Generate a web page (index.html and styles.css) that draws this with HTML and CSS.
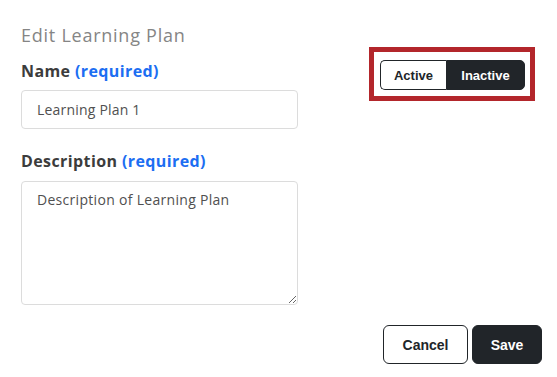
FILE: index.html
```html
<!DOCTYPE html>
<html lang="en">
<head>
<meta charset="utf-8">
<title>Edit Learning Plan</title>
<link rel="stylesheet" href="styles.css">
</head>
<body>
<div class="page">
  <div class="top">
    <form class="form">
      <h1 class="title">Edit Learning Plan</h1>
      <label class="label label-name" for="name">Name <span class="req">(required)</span></label>
      <input class="field" id="name" type="text" value="Learning Plan 1">
      <label class="label label-desc" for="desc">Description <span class="req">(required)</span></label>
      <textarea class="field area" id="desc">Description of Learning Plan</textarea>
    </form>
    <div class="highlight">
      <div class="toggle">
        <button class="tog tog-active" type="button">Active</button>
        <button class="tog tog-inactive" type="button">Inactive</button>
      </div>
    </div>
  </div>
  <div class="actions">
    <button class="btn btn-cancel" type="button">Cancel</button>
    <button class="btn btn-save" type="button">Save</button>
  </div>
</div>
</body>
</html>
```

FILE: styles.css
```css
* { box-sizing: border-box; }
html, body { margin: 0; padding: 0; background: #fff; }
body { font-family: "Open Sans", "Noto Sans", sans-serif; }

.page {
  padding: 23px 15px 0 21px;
}

.top {
  display: flex;
  gap: 71px;
  align-items: flex-start;
}

.form {
  width: 277px;
  display: flex;
  flex-direction: column;
  margin: 0;
}

.title {
  margin: 0;
  font-size: 18px;
  line-height: 24px;
  font-weight: 400;
  letter-spacing: 0.75px;
  color: #858585;
}

.label {
  font-size: 16px;
  line-height: 22px;
  font-weight: 700;
  letter-spacing: 0.4px;
  color: #3c3c3c;
}
.label-name { margin-top: 13px; }
.label-desc { margin-top: 21px; }
.req { color: #1c6ef2; }

.field {
  display: block;
  width: 277px;
  margin-top: 8px;
  border: 1px solid #dcdcdc;
  border-radius: 4px;
  font-family: "Open Sans", "Noto Sans", sans-serif;
  font-size: 14px;
  line-height: 20px;
  letter-spacing: 0.2px;
  color: #505050;
  background: #fff;
  outline: none;
}
input.field {
  height: 39px;
  padding: 0 15px;
}
.area {
  margin-top: 9px;
  height: 124px;
  padding: 8px 15px;
  letter-spacing: 0.3px;
  resize: vertical;
}

.highlight {
  margin-top: 24px;
  width: 166px;
  border: 5px solid #b3262b;
  padding: 8px 5px 6px 6px;
}

.toggle {
  display: flex;
  height: 30px;
}

.tog {
  font-family: "Liberation Sans", Arial, sans-serif;
  font-weight: 700;
  font-size: 13px;
  padding: 0;
  margin: 0;
  height: 30px;
  cursor: pointer;
}
.tog-active {
  width: 66px;
  background: #fff;
  color: #212529;
  border: 1px solid #212529;
  border-right: none;
  border-radius: 5px 0 0 5px;
}
.tog-inactive {
  width: 79px;
  background: #212529;
  color: #fff;
  border: 1px solid #212529;
  border-radius: 0 5px 5px 0;
}

.actions {
  display: flex;
  justify-content: flex-end;
  gap: 4px;
  margin-top: 20px;
}

.btn {
  font-family: "Liberation Sans", Arial, sans-serif;
  font-weight: 700;
  font-size: 14px;
  height: 39px;
  border-radius: 6px;
  border: 1px solid #212529;
  cursor: pointer;
}
.btn-cancel {
  width: 85px;
  background: #fff;
  color: #212529;
}
.btn-save {
  width: 70px;
  background: #212529;
  color: #fff;
}
```
